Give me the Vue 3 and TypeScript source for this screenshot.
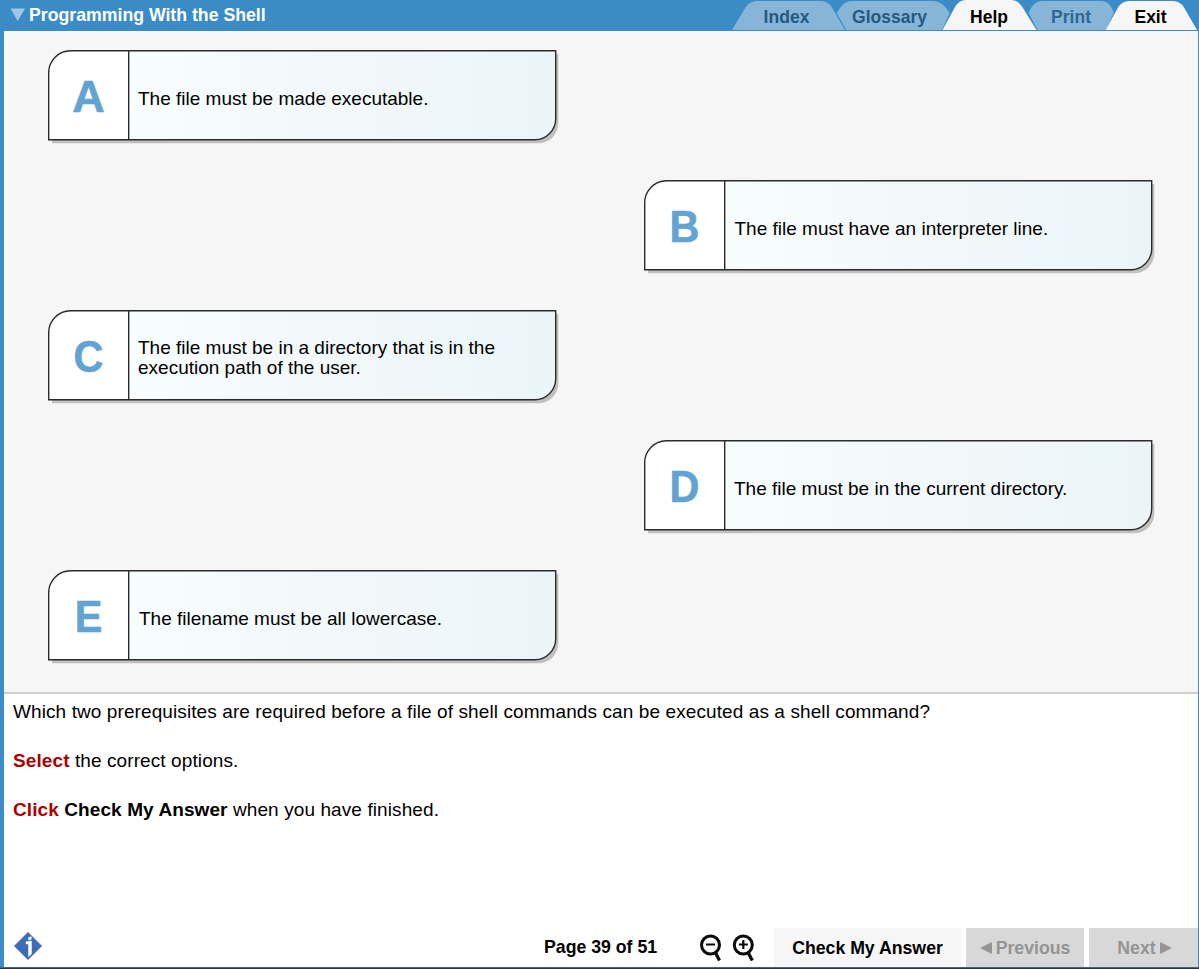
<script setup lang="ts">
interface Tab {
  label: string
  shape: string
  x: number
  width: number
  active: boolean
}

interface Option {
  letter: string
  lines: string[]
  side: 'left' | 'right'
  inset: number
}

// Inactive tabs come first so that the active ones overlap them.
const tabs: Tab[] = [
  { label: 'Index', x: 43.5, width: 46, active: false, shape: 'M12 30 L25.5 7.5 Q29.5 1 37 1 H101 Q108 1 112 7.5 L125 30 Z' },
  { label: 'Glossary', x: 132, width: 75, active: false, shape: 'M126.2 30 L116.7 13 L120 8 Q124.5 1 132 1 H212 Q221 1 226 8 L229.7 13 L222 30 Z' },
  { label: 'Print', x: 331, width: 40, active: false, shape: 'M317.5 30 L308.5 13 L311 8 Q315.5 1 322 1 H381 Q388 1 391 7 L394 12.5 L386 30 Z' },
  { label: 'Help', x: 250, width: 38, active: true, shape: 'M222.5 30 L235 7 Q239 0 246 0 H291 Q298 0 302 6.5 L316.5 30 Z' },
  { label: 'Exit', x: 414.5, width: 32, active: true, shape: 'M385.7 30 L398 7.5 Q402 1 409 1 H453 Q460 1 464 7.5 L477 30 Z' },
]

const options: Option[] = [
  { letter: 'A', lines: ['The file must be made executable.'], side: 'left', inset: 90 },
  { letter: 'B', lines: ['The file must have an interpreter line.'], side: 'right', inset: 90.5 },
  { letter: 'C', lines: ['The file must be in a directory that is in the', 'execution path of the user.'], side: 'left', inset: 90 },
  { letter: 'D', lines: ['The file must be in the current directory.'], side: 'right', inset: 90 },
  { letter: 'E', lines: ['The filename must be all lowercase.'], side: 'left', inset: 91 },
]
</script>

<template>
  <div class="window">
    <header class="topbar">
      <svg class="marker" width="16" height="14" viewBox="0 0 16 14"><path d="M0.5 0.5 H15 L7.7 13 Z" fill="#a0c6e2" /></svg>
      <h1 class="title">Programming With the Shell</h1>
      <svg class="tabs" width="479" height="30" viewBox="0 0 479 30">
        <g v-for="tab in tabs" :key="tab.label">
          <path :d="tab.shape" :fill="tab.active ? '#f6f6f6' : '#86b5d8'" />
          <text :x="tab.x" y="22.5" :textLength="tab.width" :class="['tab-label', { active: tab.active, dim: tab.label === 'Print' }]">{{ tab.label }}</text>
        </g>
      </svg>
    </header>

    <main class="options">
      <div v-for="option in options" :key="option.letter" :class="['option', option.side]">
        <svg class="frame" width="514" height="96" viewBox="0 0 514 96">
          <defs>
            <linearGradient :id="'fill-' + option.letter" x1="0" x2="1" y1="0" y2="0">
              <stop offset="0" stop-color="#f8fefd" />
              <stop offset="0.4" stop-color="#f3f9fb" />
              <stop offset="1" stop-color="#ebf5f8" />
            </linearGradient>
          </defs>
          <path d="M24 4 H510.3 V72 A20 20 0 0 1 489 93.2 H4 V24 A20 20 0 0 1 24 4 Z" fill="#c1c0c1" />
          <path d="M23 0.7 H507.7 V68.7 A21 21 0 0 1 487 89.7 H0.7 V23 A22 22 0 0 1 23 0.7 Z" fill="#fff" />
          <path d="M80.7 0.7 H507.7 V68.7 A21 21 0 0 1 487 89.7 H80.7 Z" :fill="'url(#fill-' + option.letter + ')'" />
          <path d="M23 0.7 H507.7 V68.7 A21 21 0 0 1 487 89.7 H0.7 V23 A22 22 0 0 1 23 0.7 Z M80.7 0.7 V89.7" fill="none" stroke="#2b2b2b" stroke-width="1.4" />
        </svg>
        <div :class="['letter', { narrow: option.letter !== 'A' }]">{{ option.letter }}</div>
        <div :class="['answer', { wrapped: option.lines.length > 1 }]" :style="{ paddingLeft: option.inset - 81 + 'px' }">
          <div v-for="line in option.lines" :key="line">{{ line }}</div>
        </div>
      </div>
    </main>

    <section class="question">
      <p>Which two prerequisites are required before a file of shell commands can be executed as a shell command?</p>
      <p><b class="verb">Select</b> the correct options.</p>
      <p><b class="verb">Click</b> <b>Check My Answer</b> when you have finished.</p>
    </section>

    <footer class="controls">
      <svg class="info" width="30" height="30" viewBox="0 0 30 30">
        <path d="M15 1 L29 15 L15 29 L1 15 Z" fill="#3d6cb9" />
        <path d="M15.5 6.5 L18.3 5.7 V8.2 L15.5 8.8 Z M13 10.8 L18.5 10 V23 L15.5 25.5 V12.8 L13 13 Z" fill="#fff" stroke="#fff" stroke-width="0.5" />
      </svg>
      <div class="page">Page 39 of 51</div>
      <svg class="zoom" width="56" height="28" viewBox="0 0 56 28" fill="none" stroke="#0a0a0a">
        <g stroke-width="3">
          <circle cx="10.5" cy="11" r="9" />
          <path d="M15 18 L19.5 26.5" stroke-width="3.3" />
          <circle cx="43.3" cy="11" r="9" />
          <path d="M47.8 18 L52.3 26.5" stroke-width="3.3" />
        </g>
        <path d="M6 10.5 H15 M38.8 10.5 H47.8 M43.3 6 V15" stroke-width="2.2" />
      </svg>
      <button class="check">Check My Answer</button>
      <button class="step previous">
        <svg width="12" height="12" viewBox="0 0 12 12"><path d="M12 0 V12 L0 6 Z" fill="#949494" /></svg>
        <span>Previous</span>
      </button>
      <button class="step next">
        <span>Next</span>
        <svg width="12" height="12" viewBox="0 0 12 12"><path d="M0 0 V12 L12 6 Z" fill="#949494" /></svg>
      </button>
    </footer>
    <div class="edge"></div>
  </div>
</template>

<style>
html, body { margin: 0; overflow: hidden; }
</style>

<style scoped>
* { box-sizing: border-box; }
.window {
  width: 1199px; height: 969px; display: flex; flex-direction: column;
  font-family: "Liberation Sans", Arial, sans-serif; color: #000;
  background: linear-gradient(90deg, #3c8cc5 4px, #fff 4px, #fff 1198px, #3c8cc5 1198px);
}
.topbar { height: 31px; flex: none; background: #3b8cc6; display: flex; align-items: flex-start; }
.marker { margin: 8px 3px 0 10px; flex: none; }
.title { margin: 4px 0 0; font-size: 17.7px; line-height: 22px; font-weight: bold; color: #fff; white-space: nowrap; }
.tabs { margin-left: auto; flex: none; }
.tab-label { font-size: 17.5px; font-weight: bold; fill: #245a80; }
.tab-label.dim { fill: #2f6890; }
.tab-label.active { fill: #000; }
.options {
  height: 663px; flex: none; margin: 0 1px 0 4px; padding: 19px 46px 0 44px;
  background: #f6f6f6; border-bottom: 2px solid #d0d0d0;
  display: flex; flex-direction: column; gap: 39px;
}
.option { position: relative; width: 508px; height: 91px; flex: none; display: flex; align-items: center; }
.option.left { align-self: flex-start; }
.option.right { align-self: flex-end; }
.frame { position: absolute; left: 0; top: 0; }
.letter {
  position: relative; width: 81px; padding-top: 3px; text-align: center;
  font-size: 45px; line-height: 50px; font-weight: bold; color: #62a3d1;
  -webkit-text-stroke: 0.6px #62a3d1;
}
.letter.narrow { transform: scaleX(0.92); }
.answer { position: relative; font-size: 19px; line-height: 20px; white-space: nowrap; padding-top: 6px; }
.answer.wrapped { padding-top: 4px; }
.question { flex: 1; padding: 7px 0 0 13px; font-size: 19px; line-height: 22px; letter-spacing: 0.095px; }
.question p { margin: 0 0 27px; white-space: nowrap; }
.verb { color: #ac0000; }
.controls { height: 39px; flex: none; display: flex; align-items: flex-start; padding: 0 1px 0 13px; }
.info { margin: 3px 0 0; }
.page { margin: 8px 0 0 501px; width: 156px; font-size: 17.7px; line-height: 22px; font-weight: bold; white-space: nowrap; }
.zoom { margin: 6px 18px 0 0; flex: none; }
button { border: 0; padding: 0; height: 39px; font: bold 17.7px/22px "Liberation Sans", Arial, sans-serif; white-space: nowrap; }
.check { width: 187px; background: #f6f6f6; color: #000; margin-right: 5px; }
.step { background: #d8d8d8; color: #949494; display: flex; align-items: center; gap: 4px; justify-content: center; }
.previous { width: 118px; margin-right: 5px; }
.next { flex: 1; padding-left: 2px; }
.edge { height: 2px; flex: none; background: linear-gradient(#376798 1px, #2b3542 1px); }
</style>
